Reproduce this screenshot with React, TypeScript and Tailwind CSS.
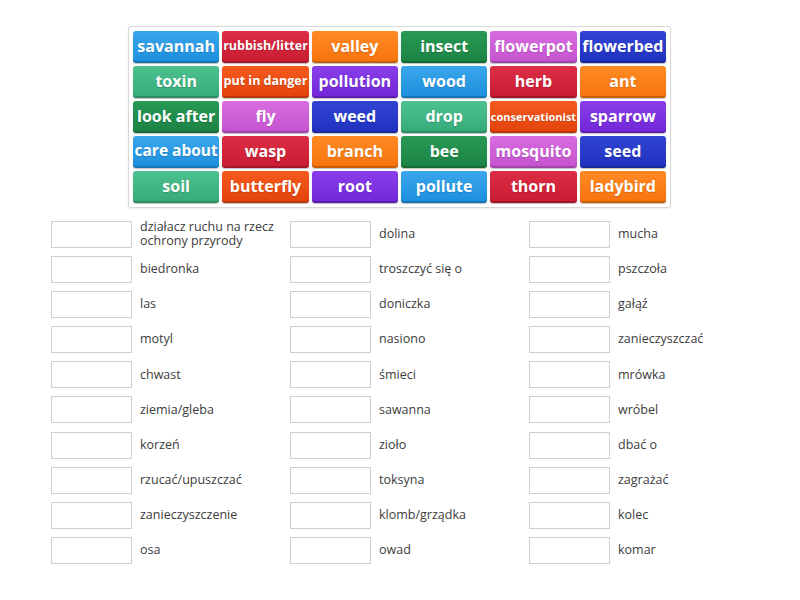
import React from "react";

type Tone = "blue" | "red" | "orange" | "green" | "pink" | "navy" | "mint" | "flame" | "violet";

const toneClass: Record<Tone, string> = {
  blue: "bg-gradient-to-b from-[#3aa6ec] to-[#1a8fdc]",
  red: "bg-gradient-to-b from-[#dc2d45] to-[#c81a31]",
  orange: "bg-gradient-to-b from-[#ff8a24] to-[#f6730a]",
  green: "bg-gradient-to-b from-[#289a55] to-[#1b8244]",
  pink: "bg-gradient-to-b from-[#d86ce0] to-[#c453ce]",
  navy: "bg-gradient-to-b from-[#3044d2] to-[#2131bf]",
  mint: "bg-gradient-to-b from-[#4cc08f] to-[#36ab79]",
  flame: "bg-gradient-to-b from-[#f55a1d] to-[#e3420b]",
  violet: "bg-gradient-to-b from-[#8a3eea] to-[#7226d8]",
};

type Tile = { text: string; tone: Tone; size?: string };

const tiles: Tile[] = [
  { text: "savannah", tone: "blue" },
  { text: "rubbish/litter", tone: "red", size: "text-[12.5px]" },
  { text: "valley", tone: "orange" },
  { text: "insect", tone: "green" },
  { text: "flowerpot", tone: "pink" },
  { text: "flowerbed", tone: "navy" },

  { text: "toxin", tone: "mint" },
  { text: "put in danger", tone: "flame", size: "text-[12.5px]" },
  { text: "pollution", tone: "violet" },
  { text: "wood", tone: "blue" },
  { text: "herb", tone: "red" },
  { text: "ant", tone: "orange" },

  { text: "look after", tone: "green" },
  { text: "fly", tone: "pink" },
  { text: "weed", tone: "navy" },
  { text: "drop", tone: "mint" },
  { text: "conservationist", tone: "flame", size: "text-[11px]" },
  { text: "sparrow", tone: "violet" },

  { text: "care about", tone: "blue", size: "text-[15.5px]" },
  { text: "wasp", tone: "red" },
  { text: "branch", tone: "orange" },
  { text: "bee", tone: "green" },
  { text: "mosquito", tone: "pink" },
  { text: "seed", tone: "navy" },

  { text: "soil", tone: "mint" },
  { text: "butterfly", tone: "flame" },
  { text: "root", tone: "violet" },
  { text: "pollute", tone: "blue" },
  { text: "thorn", tone: "red" },
  { text: "ladybird", tone: "orange" },
];

const columns: string[][] = [
  [
    "działacz ruchu na rzecz ochrony przyrody",
    "biedronka",
    "las",
    "motyl",
    "chwast",
    "ziemia/gleba",
    "korzeń",
    "rzucać/upuszczać",
    "zanieczyszczenie",
    "osa",
  ],
  [
    "dolina",
    "troszczyć się o",
    "doniczka",
    "nasiono",
    "śmieci",
    "sawanna",
    "zioło",
    "toksyna",
    "klomb/grządka",
    "owad",
  ],
  [
    "mucha",
    "pszczoła",
    "gałąź",
    "zanieczyszczać",
    "mrówka",
    "wróbel",
    "dbać o",
    "zagrażać",
    "kolec",
    "komar",
  ],
];

function WordTile({ tile }: { tile: Tile }) {
  return (
    <div
      className={`${toneClass[tile.tone]} h-[32px] rounded-[3px] flex items-center justify-center overflow-hidden whitespace-nowrap text-white font-bold leading-none shadow-[inset_0_-2px_0_rgba(0,0,0,0.18),0_1px_1px_rgba(0,0,0,0.25)] [text-shadow:0_1px_1px_rgba(0,0,0,0.15)] ${tile.size ?? "text-[16px]"}`}
    >
      <span className="-mt-[2px]">{tile.text}</span>
    </div>
  );
}

function AnswerRow({ label }: { label: string }) {
  return (
    <div className="h-[26px] flex items-center">
      <div className="w-[81px] h-[27px] shrink-0 border border-[#cfcfcf] bg-white" />
      <div className="ml-[8px] w-[145px] text-[12.5px] leading-[14.5px] text-[#3c3c3c]">{label}</div>
    </div>
  );
}

export default function App() {
  return (
    <div
      className="w-[800px] h-[600px] bg-white overflow-hidden"
      style={{ fontFamily: '"Open Sans", "Noto Sans", sans-serif' }}
    >
      <div className="pt-[26px] flex justify-center">
        <div className="ml-[-1px] w-[543px] p-[4px] border border-[#d8d8d8] rounded-[3px] bg-white shadow-[0_1px_2px_rgba(0,0,0,0.08)]">
          <div className="grid grid-cols-6 gap-x-[3px] gap-y-[3px]">
            {tiles.map((t) => (
              <WordTile key={t.text} tile={t} />
            ))}
          </div>
        </div>
      </div>

      <div className="mt-[13px] pl-[51px] flex">
        {columns.map((col, i) => (
          <div key={i} className="w-[239px] flex flex-col gap-y-[9.2px]">
            {col.map((label) => (
              <AnswerRow key={label} label={label} />
            ))}
          </div>
        ))}
      </div>
    </div>
  );
}
